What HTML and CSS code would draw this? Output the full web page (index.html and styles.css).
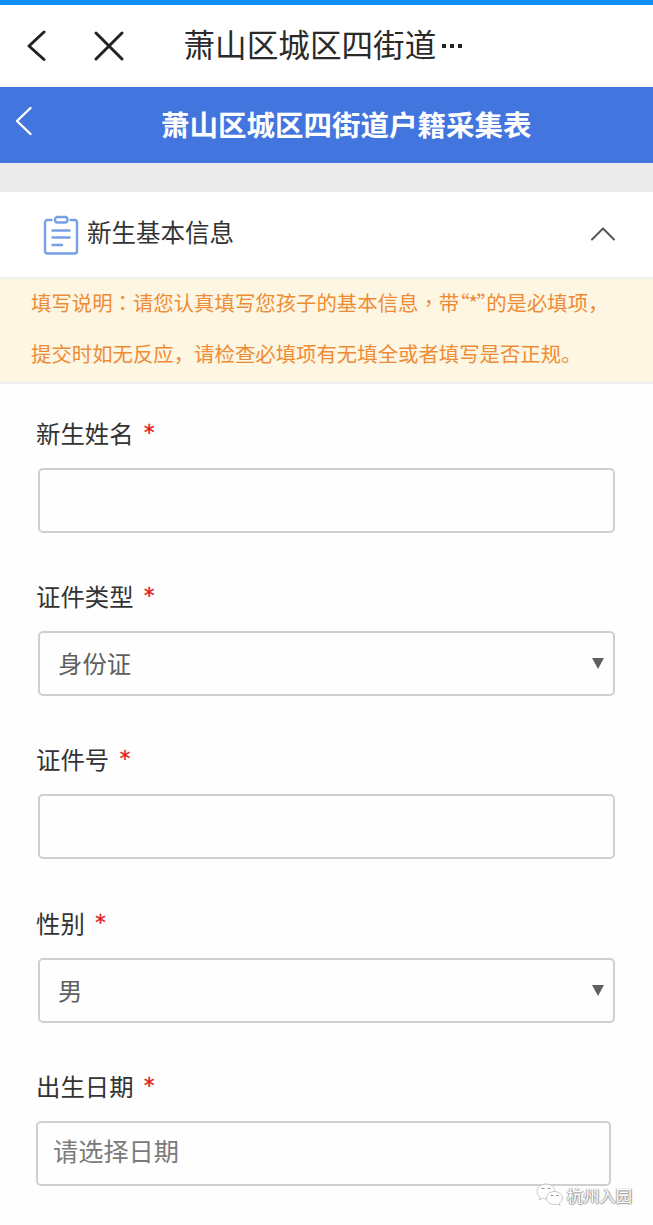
FILE: index.html
```html
<!DOCTYPE html>
<html lang="zh-CN">
<head>
	<meta charset="utf-8">
	<title>萧山区城区四街道户籍采集表</title>
	<link rel="stylesheet" href="styles.css">
</head>
<body>
	<div class="status-bar"></div>
	<nav class="nav">
		<svg class="nav-back" width="20" height="34" viewBox="0 0 20 34"><path d="M18 3L3 17l15 13.500"/></svg>
		<svg class="nav-close" width="32" height="32" viewBox="0 0 32 32"><path d="M3 3l26 26M29 3L3 29"/></svg>
		<span class="nav-title">萧山区城区四街道</span>
		<span class="nav-dots"><i></i><i></i><i></i></span>
	</nav>
	<header class="header">
		<svg class="header-back" width="18" height="30" viewBox="0 0 18 30"><path d="M15.500 2L2 15l13.500 13"/></svg>
		<h1>萧山区城区四街道户籍采集表</h1>
	</header>

	<section class="section-title">
		<svg class="clipboard" width="36" height="40" viewBox="0 0 36 40">
			<path d="M8.500 5H4.500a2.500 2.500 0 0 0-2.500 2.500v28.500a2.500 2.500 0 0 0 2.500 2.500h27a2.500 2.500 0 0 0 2.500-2.500V7.500A2.500 2.500 0 0 0 31.500 5H27.500"/>
			<rect x="12" y="2" width="12.500" height="5.500" rx="2.500"/>
			<path d="M9.500 15.500h17M9.500 22.500h17M9.500 30h9.500"/>
		</svg>
		<h2>新生基本信息</h2>
		<svg class="arrow-up" width="26" height="16" viewBox="0 0 26 16"><path d="M2 13.500L13 2.500l11 11"/></svg>
	</section>

	<p class="notice">填写说明<span lang="zh-TW">：</span>请您认真填写您孩子的基本信息<span lang="zh-TW">，</span>带<q>*</q>的是必填项，<br>提交时如无反应，请检查必填项有无填全或者填写是否正规。</p>

	<form class="form">
		<div class="field">
			<label for="name">新生姓名 <em>*</em></label>
			<input type="text" id="name" name="name">
		</div>
		<div class="field">
			<label for="cardType">证件类型 <em>*</em></label>
			<div class="select">
				<select id="cardType" name="cardType">
					<option>身份证</option>
				</select>
			</div>
		</div>
		<div class="field">
			<label for="cardNo">证件号 <em>*</em></label>
			<input type="text" id="cardNo" name="cardNo">
		</div>
		<div class="field">
			<label for="sex">性别 <em>*</em></label>
			<div class="select">
				<select id="sex" name="sex">
					<option>男</option>
				</select>
			</div>
		</div>
		<div class="field field-date">
			<label for="birthday">出生日期 <em>*</em></label>
			<input type="text" id="birthday" name="birthday" placeholder="请选择日期">
		</div>
	</form>

	<div class="watermark">
		<svg width="28" height="24" viewBox="0 0 28 24">
			<path d="M10 1C5 1 1 4.300 1 8.500c0 2.300 1.200 4.300 3.100 5.700L3.300 17l3.200-1.700c1.100.3 2.300.500 3.500.500 5 0 9-3.300 9-7.400S15 1 10 1z"/>
			<path d="M18.500 8.500c-4.400 0-8 2.900-8 6.500s3.600 6.500 8 6.500c1 0 2-.2 2.900-.4l2.700 1.400-.7-2.400c1.900-1.200 3.100-3 3.100-5.100 0-3.600-3.600-6.500-8-6.500z"/>
			<path class="eyes" d="M6 5.500h2M12 5.500h2M15 12.500h2M20.500 12.500h2"/>
		</svg>
		<span>杭州入园</span>
	</div>
</body>
</html>
```

FILE: styles.css
```css
* {
	box-sizing: border-box;
}

body {
	position: relative;
	margin: 0;
	height: 1225px;
	overflow: hidden;
	background-color: #fefefe;
	font-family: "Noto Sans CJK SC", sans-serif;
	color: #333;
}

svg {
	fill: none;
	stroke-linecap: round;
	stroke-linejoin: round;
	flex: none;
}

.status-bar {
	height: 5px;
	background-color: #118fff;
}

/* browser bar */
.nav {
	display: flex;
	align-items: center;
	height: 82px;
	padding-left: 26px;
	background-color: #fff;
}

.nav svg {
	stroke: #222226;
	stroke-width: 3;
}

.nav-close {
	margin-left: 47px;
}

.nav-title {
	margin: 0 0 6px 58.5px;
	font-size: 31.6px;
	line-height: 40px;
	font-weight: 400;
	color: #2a2a2a;
}

.nav-dots {
	display: flex;
	gap: 4px;
	margin: 0 0 1px 6px;
}

.nav-dots i {
	width: 4px;
	height: 4px;
	background-color: #222;
}

.header {
	display: flex;
	align-items: center;
	height: 76px;
	padding-left: 15px;
	background-color: #4375df;
	color: #fff;
}

.header-back {
	margin-bottom: 8px;
	stroke: #fff;
	stroke-width: 2.4;
}

.header h1 {
	margin: 0 0 3px 128px;
	font-size: 28.5px;
	line-height: 40px;
	font-weight: 700;
}

.section-title {
	display: flex;
	align-items: center;
	height: 114px;
	padding: 1px 37px 0 43px;
	border-top: 29px solid #eaeaea;
	background-color: #fff;
}

.clipboard {
	stroke: #77a1e6;
	stroke-width: 2.4;
}

.section-title h2 {
	flex: 1;
	margin: 0 0 6px 8px;
	font-size: 24.5px;
	line-height: 36px;
	font-weight: 400;
}

.arrow-up {
	margin-bottom: 2px;
	stroke: #555;
	stroke-width: 2;
}

.notice {
	height: 107px;
	margin: 0;
	padding: 0 30px 0 31px;
	border-top: 2px solid #efefef;
	border-bottom: 2px solid #efefef;
	background-color: #fdf6e3;
	font-size: 20.4px;
	line-height: 51px;
	white-space: nowrap;
	color: #ee8c35;
}

/* pulls the text a little above the middle of the line */
.notice::before {
	content: "";
	display: block;
	margin-top: -2px;
}

.notice span {
	font-family: "Noto Sans CJK TC", sans-serif;
}

.notice q {
	font-feature-settings: "palt";
	letter-spacing: -1px;
	quotes: "“" "”";
}

.form {
	padding: 32px 38px 0;
}

.field {
	height: 163.2px;
}

label {
	display: block;
	height: 52px;
	margin-left: -2px;
	font-size: 24.4px;
	line-height: 34px;
}

label em {
	margin-left: 5px;
	font-family: "DejaVu Sans", sans-serif;
	font-size: 21px;
	font-style: normal;
	line-height: 1;
	vertical-align: 3px;
	color: #e61414;
	-webkit-text-stroke: 0.4px #e61414;
}

input,
select {
	display: block;
	width: 100%;
	height: 65px;
	margin: 0;
	padding: 0 18px 2px;
	border: 2px solid #cfcfcf;
	border-radius: 5px;
	background-color: #fefefe;
	font-family: inherit;
	font-size: 24.4px;
	color: #5f5f5f;
	appearance: none;
}

.select {
	position: relative;
}

.select::after {
	content: "";
	position: absolute;
	top: 27px;
	right: 11px;
	border: 6px solid transparent;
	border-top: 11px solid #606060;
	border-bottom: 0;
}

.field-date input {
	width: 575px;
	margin-left: -2px;
	padding: 0 15px 6px;
	font-size: 25.2px;
}

input::placeholder {
	color: #7b7b7b;
}

.watermark {
	position: absolute;
	right: 21px;
	bottom: 17px;
	display: flex;
	align-items: center;
	gap: 3px;
	font-size: 16.3px;
	line-height: 26px;
	color: #fff;
	text-shadow: 1px 0 1px #888, -1px 0 1px #aaa, 0 1px 1px #999;
}

.watermark svg {
	fill: #fefefe;
	stroke: #bbb;
	stroke-width: 0.8;
}

.watermark .eyes {
	stroke: #999;
	stroke-width: 1.2;
}
```
